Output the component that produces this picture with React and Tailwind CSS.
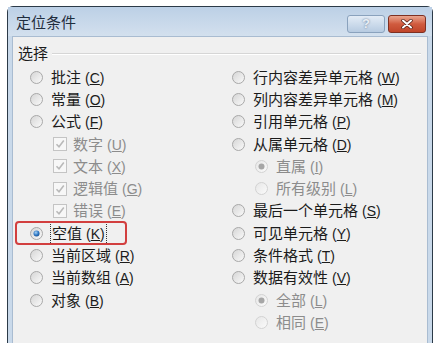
import React from "react";

const leftItems = [
  { label: "批注", key: "C", type: "radio" },
  { label: "常量", key: "O", type: "radio" },
  { label: "公式", key: "F", type: "radio" },
  { label: "数字", key: "U", type: "check", sub: true, disabled: true, checked: true },
  { label: "文本", key: "X", type: "check", sub: true, disabled: true, checked: true },
  { label: "逻辑值", key: "G", type: "check", sub: true, disabled: true, checked: true },
  { label: "错误", key: "E", type: "check", sub: true, disabled: true, checked: true },
  { label: "空值", key: "K", type: "radio", checked: true, focus: true },
  { label: "当前区域", key: "R", type: "radio" },
  { label: "当前数组", key: "A", type: "radio" },
  { label: "对象", key: "B", type: "radio" },
];

const rightItems = [
  { label: "行内容差异单元格", key: "W", type: "radio" },
  { label: "列内容差异单元格", key: "M", type: "radio" },
  { label: "引用单元格", key: "P", type: "radio" },
  { label: "从属单元格", key: "D", type: "radio" },
  { label: "直属", key: "I", type: "radio", sub: true, disabled: true, checked: true },
  { label: "所有级别", key: "L", type: "radio", sub: true, disabled: true },
  { label: "最后一个单元格", key: "S", type: "radio" },
  { label: "可见单元格", key: "Y", type: "radio" },
  { label: "条件格式", key: "T", type: "radio" },
  { label: "数据有效性", key: "V", type: "radio" },
  { label: "全部", key: "L", type: "radio", sub: true, disabled: true, checked: true },
  { label: "相同", key: "E", type: "radio", sub: true, disabled: true },
];

const Radio = ({ checked, disabled }) => (
  <svg width="13" height="13" viewBox="0 0 13 13" className="shrink-0">
    <defs>
      <linearGradient id={disabled ? "rgd" : "rg"} x1="0" y1="0" x2="1" y2="1">
        <stop offset="0" stopColor={disabled ? "#e6e6e6" : "#d4d4d4"} />
        <stop offset="1" stopColor="#fbfbfb" />
      </linearGradient>
      <radialGradient id="dot" cx="0.4" cy="0.35" r="0.7">
        <stop offset="0" stopColor="#a9d3f5" />
        <stop offset="0.6" stopColor="#2f78c4" />
        <stop offset="1" stopColor="#1b4f8f" />
      </radialGradient>
    </defs>
    <circle cx="6.5" cy="6.5" r="6" fill={`url(#${disabled ? "rgd" : "rg"})`} stroke={disabled ? "#d2d2d2" : "#a8a8a8"} />
    {checked && <circle cx="6.5" cy="6.5" r="3" fill={disabled ? "#a6a6a6" : "url(#dot)"} />}
  </svg>
);

const Check = ({ checked }) => (
  <svg width="14" height="14" viewBox="0 0 14 14" className="shrink-0">
    <rect x="0.5" y="0.5" width="13" height="13" fill="#f7f7f7" stroke="#c4c4c4" />
    {checked && <path d="M3.5 7.2 L6 9.8 L10.8 3.6" fill="none" stroke="#b9b9b9" strokeWidth="1.6" />}
  </svg>
);

const Item = ({ item }) => {
  const color = item.disabled ? "text-[#8c8c8c]" : "text-[#1b1b1b]";
  return (
    <div className={`relative flex items-center h-[22.3px] ${item.sub ? "pl-[23px]" : ""}`}>
      {/* red highlight around the chosen option */}
      {item.focus && (
        <div className="absolute left-[-15px] top-[-1px] w-[112px] h-[24px] rounded-[4px] border-2 border-[#d23f3f]" />
      )}
      {item.type === "radio" ? (
        <Radio checked={item.checked} disabled={item.disabled} />
      ) : (
        <Check checked={item.checked} />
      )}
      <span
        className={`${item.type === "radio" ? "ml-[8px]" : "ml-[6px]"} ${color} whitespace-nowrap ${
          item.focus ? "outline-1 outline-dotted outline-[#333] outline-offset-0 px-px" : ""
        }`}
      >
        {item.label}
        <span className="ml-[4px] text-[14px] font-['Liberation_Sans',sans-serif]">
          (<span className="underline">{item.key}</span>)
        </span>
      </span>
    </div>
  );
};

export default function App() {
  return (
    <div className="w-[441px] h-[343px] overflow-hidden bg-white pl-[7px] pt-[6px] font-['Noto_Sans_CJK_SC',sans-serif] text-[15px] leading-[20px]">
      <div className="w-[426px] h-[360px] rounded-t-[6px] border border-[#2c3a48] bg-[#c9d9ea] flex flex-col">
        {/* Title bar */}
        <div className="h-[29px] flex items-center justify-between pl-[8px] pr-[6px] bg-gradient-to-b from-[#bcd0e6] to-[#d3e0ee]">
          <span className="text-[#1f2d3d]">定位条件</span>
          <div className="flex gap-[3px] self-start mt-[8px]">
            <div className="w-[38px] h-[18px] rounded-[3px] border border-[#8aa2bd] bg-gradient-to-b from-[#e3ecf6] to-[#b7cbe1] flex items-center justify-center text-[13px] font-bold text-[#e9eef5] [text-shadow:0_0_2px_#56708e] font-['Liberation_Sans',sans-serif]">
              ?
            </div>
            <div className="w-[38px] h-[18px] rounded-[3px] border border-[#7e3022] bg-gradient-to-b from-[#e9a58f] via-[#d05b3f] to-[#c0452a] flex items-center justify-center">
              <svg width="12" height="10" viewBox="0 0 12 10">
                <path d="M2 1.5 L10 8.5 M10 1.5 L2 8.5" stroke="#4a1b12" strokeWidth="3.4" strokeLinecap="round" />
                <path d="M2 1.5 L10 8.5 M10 1.5 L2 8.5" stroke="#ffffff" strokeWidth="2" strokeLinecap="round" />
              </svg>
            </div>
          </div>
        </div>

        {/* Body */}
        <div className="flex-1 mx-[4px] border border-[#a9bcd1] bg-[#f0f0f0] pt-[6px] pl-[5px] pr-[6px]">
          <div className="flex items-center gap-[4px]">
            <span className="text-[#1b1b1b]">选择</span>
            <div className="flex-1 border-t border-[#d6d6d6] border-b-white border-b h-0 mt-[1px]" />
          </div>
          <div className="mt-[3px] pl-[12px] flex">
            <div className="w-[202px] flex flex-col">
              {leftItems.map((it, i) => (
                <Item key={i} item={it} />
              ))}
            </div>
            <div className="flex flex-col">
              {rightItems.map((it, i) => (
                <Item key={i} item={it} />
              ))}
            </div>
          </div>
        </div>
      </div>
    </div>
  );
}
